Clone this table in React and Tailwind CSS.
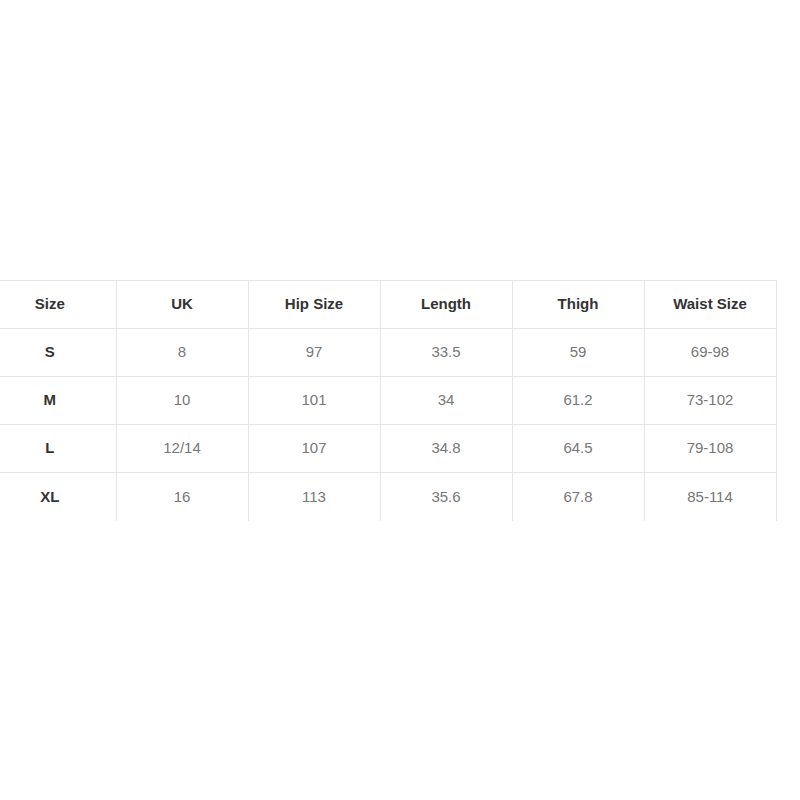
const HEAD = ["Size", "UK", "Hip Size", "Length", "Thigh", "Waist Size"];

const ROWS = [
  ["S", "8", "97", "33.5", "59", "69-98"],
  ["M", "10", "101", "34", "61.2", "73-102"],
  ["L", "12/14", "107", "34.8", "64.5", "79-108"],
  ["XL", "16", "113", "35.6", "67.8", "85-114"],
];

export default function App() {
  return (
    <div className="min-h-screen w-[800px] overflow-hidden bg-white font-['Liberation_Sans',Arial,sans-serif]">
      <div className="pt-[280px] -ml-4">
        <table className="border-collapse">
          <thead>
            <tr>
              {HEAD.map((h) => (
                <th
                  key={h}
                  className="h-12 w-[132px] border-t border-r border-b border-[#e6e6e6] text-center text-[15px] font-bold text-[#333]"
                >
                  {h}
                </th>
              ))}
            </tr>
          </thead>
          <tbody>
            {ROWS.map((row, ri) => (
              <tr key={row[0]}>
                {row.map((cell, ci) => (
                  <td
                    key={ci}
                    className={`h-12 w-[132px] border-r border-[#e6e6e6] text-center text-[15px] ${
                      ri < ROWS.length - 1 ? "border-b" : ""
                    } ${ci === 0 ? "font-bold text-[#333]" : "text-[#777]"}`}
                  >
                    {cell}
                  </td>
                ))}
              </tr>
            ))}
          </tbody>
        </table>
      </div>
    </div>
  );
}
